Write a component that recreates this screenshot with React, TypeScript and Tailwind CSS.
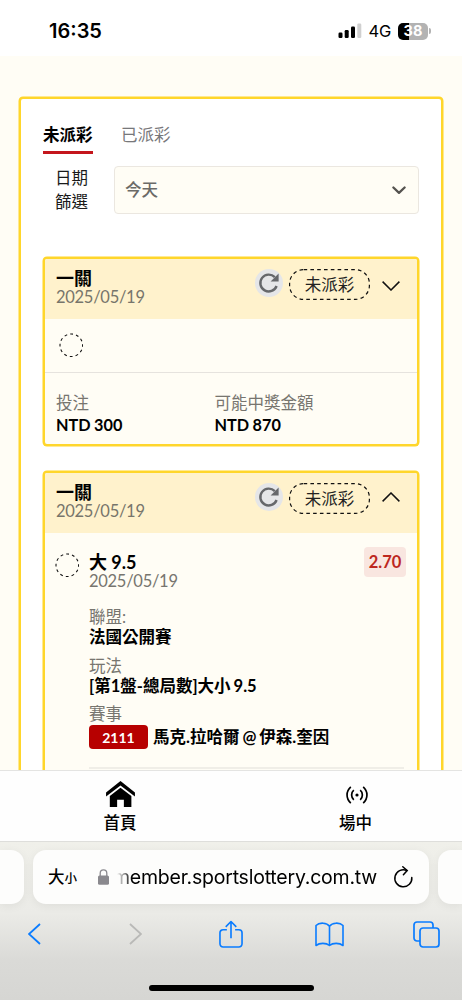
import type { ReactNode } from 'react';

function RefreshButton() {
  return (
    <svg className="h-7 w-7 shrink-0" viewBox="0 0 28 28" fill="none">
      <circle cx="14" cy="14" r="14" fill="#e5e6e8" />
      <path d="M21.6 17A8.4 8.4 0 1 1 19.8 8.2" stroke="#66686b" strokeWidth="2.4" />
      <path d="M23.6 4.6v8h-8z" fill="#66686b" />
    </svg>
  );
}

function DashedCircle() {
  return (
    <svg className="h-6 w-6 shrink-0" viewBox="0 0 24 24" fill="none">
      <circle cx="12.3" cy="12.3" r="11.3" stroke="#111" strokeWidth="1.1" strokeDasharray="2.85 3.06" strokeDashoffset="1.4" />
    </svg>
  );
}

function StatusPill() {
  return (
    <div className="relative ml-[6px] flex h-[31px] w-[81px] items-center justify-center text-[16.5px] leading-none text-[#222]">
      <svg className="absolute inset-0 h-full w-full" viewBox="0 0 81 31" fill="none">
        <rect x="0.6" y="0.6" width="79.8" height="29.8" rx="14" stroke="#111" strokeWidth="1.2" strokeDasharray="3.6 3.2" />
      </svg>
      <span className="pt-px">未派彩</span>
    </div>
  );
}

function Chevron({ open }: { open: boolean }) {
  return (
    <svg
      className={open ? '-mt-[3px] ml-[12px] h-[10px] w-[18px]' : 'mt-[2px] ml-[12px] h-[10px] w-[18px]'}
      viewBox="0 0 18 10"
      fill="none"
      stroke="#111"
      strokeWidth="1.5"
    >
      <path d={open ? 'M.6 9.4 9 1l8.4 8.4' : 'M.6.6 9 9 17.4.6'} />
    </svg>
  );
}

function BetCard({ open, children }: { open: boolean; children: ReactNode }) {
  return (
    <div className="overflow-hidden rounded-[4px] border-2 border-[#ffd62b] bg-[#fffdf5] shadow-[0_0_0_0.5px_#ffd62b]">
      <div className="flex h-[60px] bg-[#fff2cc] pr-[17px] pl-[11px]">
        <div className="flex-1 pt-[9px]">
          <div className="h-5 text-[18px] leading-5 font-bold text-black">一關</div>
          <div className="h-[19px] text-[16.5px] leading-[19px] tracking-[-0.28px] text-[#77756b]">2025/05/19</div>
        </div>
        <div className="mt-[10px] flex h-[31px] items-center">
          <div className="-mt-[3px]">
            <RefreshButton />
          </div>
          <StatusPill />
          <Chevron open={open} />
        </div>
      </div>
      {children}
    </div>
  );
}

function Field({ label, value }: { label: string; value: string }) {
  return (
    <div className="h-[48.5px] text-[16.5px]">
      <div className="h-[20px] leading-[20px] text-[#77756f]">{label}</div>
      <div className="h-[20px] leading-[20px] font-bold text-black [word-spacing:-1px]">{value}</div>
    </div>
  );
}

function StatusBar() {
  return (
    <header className="flex h-14 items-center justify-between bg-white pt-[6px] pr-[31px] pl-[49px] font-['Inter',sans-serif]">
      <span className="text-[20px] font-semibold text-black">16:35</span>
      <div className="flex items-center">
        <svg className="h-4 w-[24px]" viewBox="0 0 24 16">
          <rect x="0.5" y="9.5" width="4" height="5.5" rx="1.2" />
          <rect x="6.7" y="7" width="4" height="8" rx="1.2" />
          <rect x="13" y="3.6" width="4" height="11.4" rx="1.2" />
          <rect x="19.3" y="0.5" width="4" height="14.5" rx="1.2" fill="#d0d0d0" />
        </svg>
        <span className="ml-[6px] text-[16.5px] leading-5 tracking-[-0.2px] text-black">4G</span>
        <div className="ml-[7px] flex h-[17px] w-[30px] items-center justify-center rounded-[5px] bg-[linear-gradient(90deg,#000_38%,#b3b3b3_38%)] text-[14.5px] leading-none font-bold text-white">
          38
        </div>
        <div className="ml-px h-[6px] w-[2px] rounded-r-full bg-[#b3b3b3]" />
      </div>
    </header>
  );
}

function BottomNav() {
  return (
    <nav className="grid h-[71px] grid-cols-[240px_1fr] border-t border-[#e4e4e2] bg-[#fefefe] text-[16.5px] font-medium text-black">
      <div className="flex flex-col items-center pt-[10px]">
        <svg className="ml-px h-[26px] w-[29px]" viewBox="0 0 30 27">
          <path d="M15 0 30 12v4L15 4.8 0 16v-4z" />
          <path d="M15 7 26.3 15.7V27h-7.8v-7.5h-7V27H3.9V15.7z" />
        </svg>
        <span className="mt-[6px] leading-5">首頁</span>
      </div>
      <div className="flex flex-col items-center pt-[14px]">
        <svg className="ml-[11px] h-[20px] w-[24px]" viewBox="0 0 24 20" fill="none" stroke="#000" strokeWidth="1.7">
          <circle cx="12" cy="10" r="1.6" fill="#000" stroke="none" />
          <path d="M8.8 5.2c-2.9 2.5-2.9 7.1 0 9.6M15.2 5.2c2.9 2.5 2.9 7.1 0 9.6" />
          <path d="M5.8 1.9c-5 4.5-5 11.7 0 16.2M18.2 1.9c5 4.5 5 11.7 0 16.2" />
        </svg>
        <span className="mt-[8px] ml-[9px] leading-5">場中</span>
      </div>
    </nav>
  );
}

function BrowserBar() {
  return (
    <footer className="h-[159px] border-t border-[#dededb] bg-[linear-gradient(180deg,#f0f0ea_0%,#ebebe7_45%,#dadad7_75%,#d6d6d3_100%)]">
      <div className="mt-[8px] flex h-[54px] justify-between">
        <div className="w-[24px] rounded-r-[13px] bg-[#fdfdfc] shadow-[0_2px_10px_rgba(0,0,0,0.06)]" />
        <div className="flex w-[396px] items-center rounded-[13px] bg-[#fdfdfc] pr-[16px] pl-[15px] font-['Inter','Noto_Sans_CJK_TC',sans-serif] text-black shadow-[0_2px_10px_rgba(0,0,0,0.06)]">
          <span className="flex w-[50px] items-baseline pt-px font-medium">
            <span className="text-[16.5px]">大</span>
            <span className="text-[12.5px]">小</span>
          </span>
          <svg className="h-[16px] w-[11px]" viewBox="0 0 11 16" fill="#8a898e">
            <rect y="6.5" width="11" height="9.3" rx="1.6" />
            <path d="M2.2 7V4.2a3.3 3.3 0 0 1 6.6 0V7" fill="none" stroke="#8a898e" strokeWidth="1.3" />
          </svg>
          <div className="flex w-[268px] justify-end pt-[2px]">
            <span className="[mask-image:linear-gradient(90deg,transparent_4px,#000_19px)] text-[19.5px] tracking-[-0.22px] whitespace-nowrap">
              member.sportslottery.com.tw
            </span>
          </div>
          <svg className="ml-auto h-[22px] w-[19px] overflow-visible" viewBox="0 0 19 22" fill="none" stroke="#000" strokeWidth="1.5" strokeLinecap="round">
            <path d="M17.8 11.5A8.5 8.5 0 1 1 12.8 4.5" />
            <path d="M8.8 0.8l4.4 3.8-3.8 4.2" />
          </svg>
        </div>
        <div className="w-[24px] rounded-l-[13px] bg-[#fdfdfc] shadow-[0_2px_10px_rgba(0,0,0,0.06)]" />
      </div>
      <div className="mt-[12px] flex h-9 items-center justify-between pr-[22px] pl-[28px] text-[#0a7cff]">
        <svg className="h-[22px] w-[13px]" viewBox="0 0 13 22" fill="none" stroke="currentColor" strokeWidth="1.8">
          <path d="M12 1 1 11l11 10" />
        </svg>
        <svg className="ml-[18px] h-[22px] w-[13px]" viewBox="0 0 13 22" fill="none" stroke="#b9b9b7" strokeWidth="1.8">
          <path d="m1 1 11 10L1 21" />
        </svg>
        <svg className="ml-[8px] h-[29px] w-[24px]" viewBox="0 0 25 30" fill="none" stroke="currentColor" strokeWidth="1.7" strokeLinejoin="round">
          <path d="M8.2 10H4.3A3.3 3.3 0 0 0 1 13.3v11.4A3.3 3.3 0 0 0 4.3 28h16.4a3.3 3.3 0 0 0 3.3-3.3V13.3a3.3 3.3 0 0 0-3.3-3.3h-3.9" />
          <path d="M12.5 19V1.5M7 7l5.5-5.5L18 7" />
        </svg>
        <svg className="ml-[2px] h-[25px] w-[29px]" viewBox="0 0 29 25" fill="none" stroke="currentColor" strokeWidth="1.6" strokeLinejoin="round">
          <path d="M14.5 4.2C11.8.4 4.3.2 1 3.5v20c3.7-2.9 10.2-2.8 13.5 0 3.3-2.8 9.8-2.9 13.5 0v-20C24.7.2 17.2.4 14.5 4.2zM14.5 4.2v19.3" />
        </svg>
        <svg className="h-[27px] w-[27px]" viewBox="0 0 27 27" fill="none" stroke="currentColor" strokeWidth="1.7">
          <rect x="7" y="7" width="19" height="19" rx="3" />
          <path d="M7 20H4a3 3 0 0 1-3-3V4a3 3 0 0 1 3-3h13a3 3 0 0 1 3 3v3" />
        </svg>
      </div>
      <div className="mx-auto mt-[33px] h-[6px] w-[165px] rounded-full bg-black" />
    </footer>
  );
}

export default function App() {
  return (
    <div className="h-[1000px] w-[462px] overflow-hidden bg-[#fffdf5] font-['Lato','Noto_Sans_CJK_TC',sans-serif]">
      <StatusBar />
      <main className="h-[714px] overflow-hidden px-[19px] pt-[41px]">
        <div className="h-[720px] rounded-[4px] border-2 border-[#ffd62b] bg-white px-[22px] shadow-[0_0_0_0.5px_#ffd62b]">
          <div className="flex gap-[28px] pt-[24px] text-[16.5px] leading-[24px]">
            <div className="h-[31px] w-[50px] border-b-[3px] border-[#c4161c] font-bold text-black">未派彩</div>
            <div className="text-[#77777a]">已派彩</div>
          </div>

          <div className="mt-[12px] flex">
            <div className="w-[71px] pl-[12px] text-[16.5px] leading-[24px] text-[#1a1a1a]">
              日期
              <br />
              篩選
            </div>
            <div className="flex h-[48px] flex-1 items-center justify-between rounded-[4px] border border-[#ebe7e0] bg-[#fffdf5] pr-[12px] pl-[10px]">
              <span className="text-[16.5px] leading-none font-medium text-[#6b6a67]">今天</span>
              <svg className="mt-px h-[9px] w-[14px]" viewBox="0 0 14 9" fill="none" stroke="#55534f" strokeWidth="2.3" strokeLinecap="round" strokeLinejoin="round">
                <path d="m1.4 1.5 5.6 5.3 5.6-5.3" />
              </svg>
            </div>
          </div>

          <div className="mt-[43px] grid gap-[25px]">
            <BetCard open={false}>
              <div className="h-[54px] border-b border-[#e6e3de] pt-[14px] pl-[14px]">
                <DashedCircle />
              </div>
              <div className="grid h-[71px] grid-cols-[158.5px_1fr] pt-[18.5px] pl-[11px] text-[16.5px] leading-[22px]">
                <div>
                  <div className="text-[#77756f]">投注</div>
                  <div className="text-[16.25px] font-bold text-black [word-spacing:-0.5px]">NTD 300</div>
                </div>
                <div>
                  <div className="text-[#77756f]">可能中獎金額</div>
                  <div className="text-[16.25px] font-bold text-black [word-spacing:-0.5px]">NTD 870</div>
                </div>
              </div>
            </BetCard>

            <BetCard open>
              <div className="flex h-[320px] items-start pt-[14px] pr-[11px] pl-[10px]">
                <div className="pt-[6px]">
                  <DashedCircle />
                </div>
                <div className="ml-[10px] flex-1">
                  <div className="flex items-start justify-between">
                    <div className="pt-[5px]">
                      <div className="h-[20px] text-[18px] leading-[20px] font-bold text-black">大 9.5</div>
                      <div className="h-[20px] text-[16.5px] leading-[19px] tracking-[-0.28px] text-[#77756f]">2025/05/19</div>
                    </div>
                    <div className="flex h-[30px] w-[42px] items-center justify-center rounded-[4px] bg-[#f9e6e0] text-[16.5px] font-bold text-[#bd271e]">
                      2.70
                    </div>
                  </div>
                  <div className="pt-[15px]">
                    <Field label="聯盟:" value="法國公開賽" />
                    <Field label="玩法" value="[第1盤-總局數]大小 9.5" />
                    <div className="h-[20px] text-[16.5px] leading-[20px] text-[#77756f]">賽事</div>
                    <div className="mt-[1px] flex items-center">
                      <span className="flex h-[24px] w-[59px] items-center justify-center rounded-[4px] bg-[#b70000] text-[14px] font-bold text-white">
                        2111
                      </span>
                      <span className="ml-[5px] text-[16.5px] leading-6 font-bold whitespace-nowrap text-black [word-spacing:-1px]">
                        馬克.拉哈爾 @ 伊森.奎因
                      </span>
                    </div>
                  </div>
                  <div className="mt-[18px] mr-[2px] h-[2px] bg-[#f0eee7]" />
                </div>
              </div>
            </BetCard>
          </div>
        </div>
      </main>
      <BottomNav />
      <BrowserBar />
    </div>
  );
}
